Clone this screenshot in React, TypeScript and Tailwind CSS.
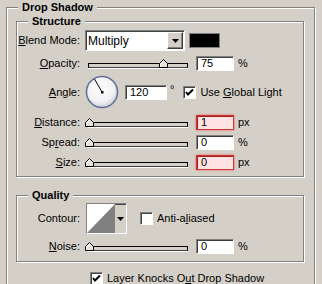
import React from "react";

const etched = "border border-[#808080] shadow-[1px_1px_0_#fff,inset_1px_1px_0_#fff]";
const sunken =
  "border border-t-[#808080] border-l-[#808080] border-b-white border-r-white shadow-[inset_1px_1px_0_#404040]";

function Legend({ children }: { children: React.ReactNode }) {
  return (
    <div className="absolute -top-[7px] left-[11px] px-[4px] bg-[#d4d0c8] font-bold leading-[13px]">
      {children}
    </div>
  );
}

function Label({ children }: { children: React.ReactNode }) {
  return <div className="w-[63px] shrink-0 text-right leading-[13px]">{children}</div>;
}

function Thumb() {
  return (
    <svg width="9" height="9" viewBox="0 0 9 9" className="block">
      <polygon points="0.5,8.5 0.5,4.5 4.5,0.5 8.5,4.5 8.5,8.5" fill="#e4e2dc" stroke="#000" />
      <polyline points="1.5,7.5 1.5,4.9 4.5,1.9" fill="none" stroke="#fff" />
    </svg>
  );
}

function Slider({ pct }: { pct: number }) {
  return (
    <div className="relative w-[107px] h-[15px] shrink-0">
      <div className="absolute left-[3px] top-[7px] w-[100px] h-[5px] border border-[#000] border-b-[#404040] bg-[#d4d0c8] shadow-[0_1px_0_#fff]" />
      <div className="absolute top-[3px]" style={{ left: Math.round(pct * 99) }}>
        <Thumb />
      </div>
    </div>
  );
}

function Field({ value, warn }: { value: string; warn?: boolean }) {
  return (
    <div
      className={
        "ml-[4px] w-[38px] h-[15px] shrink-0 pl-[4px] leading-[13px] " +
        (warn
          ? "bg-[#ffe2e2] border border-[#c83838] shadow-[0_0_2px_#ff5050,inset_1px_1px_0_#a02020]"
          : "bg-white " + sunken)
      }
    >
      {value}
    </div>
  );
}

function Check() {
  return (
    <div className={"w-[13px] h-[13px] shrink-0 bg-white relative " + sunken}>
      <svg width="11" height="11" viewBox="0 0 11 11" className="absolute left-0 top-0">
        <polyline points="2,5 4,7.5 9,2.5" fill="none" stroke="#000" strokeWidth="2" />
      </svg>
    </div>
  );
}

function EmptyCheck() {
  return <div className={"w-[13px] h-[13px] shrink-0 bg-white " + sunken} />;
}

function DownArrow() {
  return (
    <svg width="7" height="4" viewBox="0 0 7 4" className="block">
      <polygon points="0,0 7,0 3.5,4" fill="#000" />
    </svg>
  );
}

function Dial() {
  return (
    <svg width="34" height="34" viewBox="0 0 34 34" className="block shrink-0">
      <defs>
        <radialGradient id="dg" cx="45%" cy="40%" r="60%">
          <stop offset="0%" stopColor="#ffffff" />
          <stop offset="70%" stopColor="#f2f2f4" />
          <stop offset="100%" stopColor="#cfd0da" />
        </radialGradient>
      </defs>
      <circle cx="17" cy="17" r="15.5" fill="url(#dg)" stroke="#5d6e98" strokeWidth="1.5" />
      <line x1="17" y1="17" x2="9.5" y2="4" stroke="#000" strokeWidth="1" />
      <rect x="16" y="16" width="2.5" height="2.5" fill="#000" />
    </svg>
  );
}

export default function App() {
  return (
    <div className="w-[322px] h-[284px] overflow-hidden bg-[#d4d0c8] text-[11px] text-black font-['Liberation_Sans',Arial,sans-serif] pt-[7px] pl-[6px]">
      <div className={"relative w-[309px] h-[300px] pt-[13px] pl-[9px] " + etched}>
        <Legend>Drop Shadow</Legend>

        <div className={"relative w-[288px] h-[156px] " + etched}>
          <Legend>Structure</Legend>

          <div className="flex items-center mt-[8px] h-[21px]">
            <Label>
              <u>B</u>lend Mode:
            </Label>
            <div className={"ml-[5px] w-[100px] h-[21px] bg-white flex items-center justify-between pl-[2px] pr-[1px] " + sunken}>
              <span className="text-[12px]">Multiply</span>
              <div className="w-[16px] h-[17px] bg-[#d4d0c8] border border-t-white border-l-white border-b-[#404040] border-r-[#404040] shadow-[inset_-1px_-1px_0_#808080] flex items-center justify-center">
                <DownArrow />
              </div>
            </div>
            <div className="ml-[4px] w-[31px] h-[15px] bg-black border border-[#808080]" />
          </div>

          <div className="flex items-center mt-[5px] h-[15px]">
            <Label>
              <u>O</u>pacity:
            </Label>
            <div className="ml-[5px]">
              <Slider pct={0.75} />
            </div>
            <Field value="75" />
            <span className="ml-[4px]">%</span>
          </div>

          <div className="flex items-center mt-[4px] h-[34px]">
            <Label>
              <u>A</u>ngle:
            </Label>
            <div className="ml-[5px]">
              <Dial />
            </div>
            <div className={"ml-[6px] w-[42px] h-[15px] bg-white pl-[4px] leading-[13px] " + sunken}>120</div>
            <span className="ml-[3px] -mt-[5px]">°</span>
            <div className="ml-[9px]">
              <Check />
            </div>
            <span className="ml-[4px]">
              Use <u>G</u>lobal Light
            </span>
          </div>

          <div className="flex items-center mt-[6px] h-[15px]">
            <Label>
              <u>D</u>istance:
            </Label>
            <div className="ml-[5px]">
              <Slider pct={0} />
            </div>
            <Field value="1" warn />
            <span className="ml-[4px]">px</span>
          </div>

          <div className="flex items-center mt-[5px] h-[15px]">
            <Label>
              Sp<u>r</u>ead:
            </Label>
            <div className="ml-[5px]">
              <Slider pct={0} />
            </div>
            <Field value="0" />
            <span className="ml-[4px]">%</span>
          </div>

          <div className="flex items-center mt-[5px] h-[15px]">
            <Label>
              <u>S</u>ize:
            </Label>
            <div className="ml-[5px]">
              <Slider pct={0} />
            </div>
            <Field value="0" warn />
            <span className="ml-[4px]">px</span>
          </div>
        </div>

        <div className={"relative mt-[18px] w-[288px] h-[67px] " + etched}>
          <Legend>Quality</Legend>

          <div className="flex items-center mt-[7px] h-[31px]">
            <Label>Contour:</Label>
            <div className={"ml-[6px] w-[41px] h-[31px] flex bg-[#d4d0c8] " + sunken}>
              <svg width="28" height="29" viewBox="0 0 28 29" className="block shrink-0">
                <rect x="0" y="0" width="28" height="29" fill="#fff" />
                <polygon points="0,29 28,0 28,29" fill="#808080" />
              </svg>
              <div className="flex-1 flex items-center justify-center">
                <DownArrow />
              </div>
            </div>
            <div className="ml-[13px]">
              <EmptyCheck />
            </div>
            <span className="ml-[4px]">
              Anti-a<u>l</u>iased
            </span>
          </div>

          <div className="flex items-center mt-[5px] h-[15px]">
            <Label>
              <u>N</u>oise:
            </Label>
            <div className="ml-[5px]">
              <Slider pct={0} />
            </div>
            <Field value="0" />
            <span className="ml-[4px]">%</span>
          </div>
        </div>

        <div className="flex items-center mt-[8px] ml-[74px]">
          <Check />
          <span className="ml-[4px]">
            Layer Knocks O<u>u</u>t Drop Shadow
          </span>
        </div>
      </div>
    </div>
  );
}
